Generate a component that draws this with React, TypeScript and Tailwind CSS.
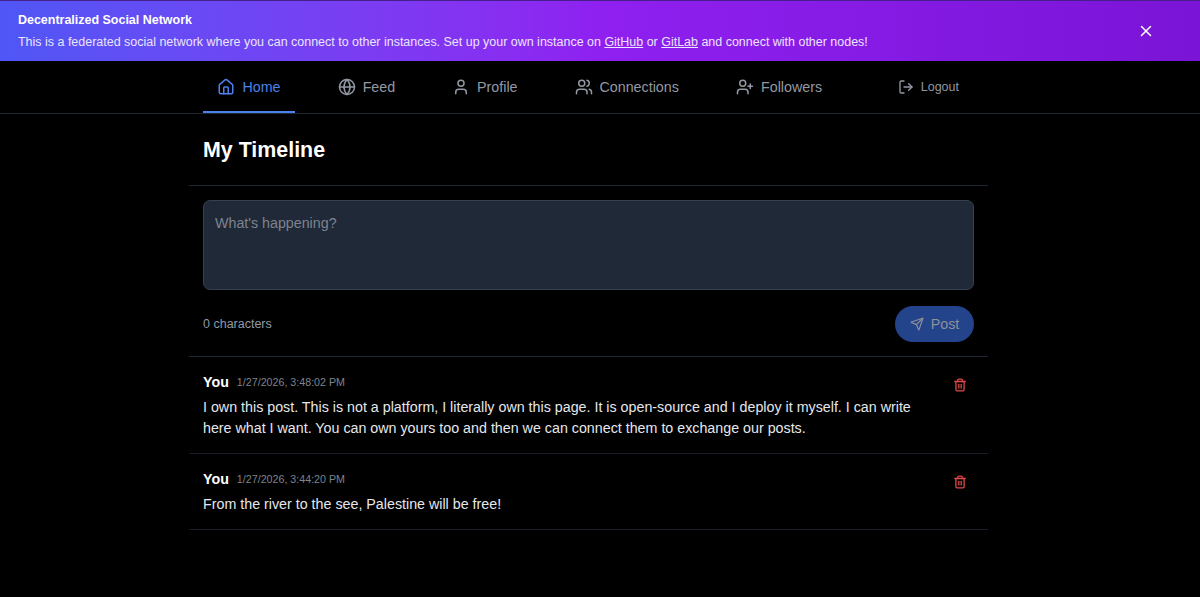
import { useState } from 'react'
import { Globe, House, LogOut, Send, Trash2, User, UserPlus, Users, X, type LucideIcon } from 'lucide-react'

interface NavItem {
    label: string
    icon: LucideIcon
    className: string
}

interface Post {
    id: number
    author: string
    date: string
    content: string
}

const navItems: NavItem[] = [
    { label: "Home", icon: House, className: "w-[92px]" },
    { label: "Feed", icon: Globe, className: "w-[86px]" },
    { label: "Profile", icon: User, className: "w-[94px]" },
    { label: "Connections", icon: Users, className: "w-[133px]" },
    { label: "Followers", icon: UserPlus, className: "w-[115px]" }
]

const initialPosts: Post[] = [
    {
        id: 2,
        author: "You",
        date: "1/27/2026, 3:48:02 PM",
        content: "I own this post. This is not a platform, I literally own this page. It is open-source and I deploy it myself. I can write here what I want. You can own yours too and then we can connect them to exchange our posts."
    },
    {
        id: 1,
        author: "You",
        date: "1/27/2026, 3:44:20 PM",
        content: "From the river to the see, Palestine will be free!"
    }
]

// Main Component
const App = () => {

    const [showBanner, setShowBanner] = useState(true)
    const [active, setActive] = useState("Home")
    const [text, setText] = useState("")
    const [posts, setPosts] = useState<Post[]>(initialPosts)

    const handlePost = () => {
        setPosts([{ id: Date.now(), author: "You", date: new Date().toLocaleString("en-US"), content: text }, ...posts])
        setText("")
    }

    const handleDelete = (id: number) => {
        setPosts(posts.filter((post) => post.id !== id))
    }

    return (
        <div className="min-h-screen bg-black font-['Liberation_Sans',Arial,sans-serif] text-white">

            {showBanner && <Banner onClose={() => setShowBanner(false)} />}

            <nav className="h-[53px] border-b border-[#1e2533] pr-[23px]">
                <div className="mx-auto flex h-[52px] w-[799px] justify-between px-[14px]">

                    <div className="flex gap-[28.4px]">
                        {
                            navItems.map(({ label, icon: Icon, className }) => (
                                <button
                                    key={label}
                                    onClick={() => setActive(label)}
                                    className={`${className} flex items-center justify-center gap-[7px] border-b-2 pt-px text-[14.28px] ${active === label ? "border-[#4a82ee] text-[#4a82ee]" : "border-transparent text-[#9299a5]"}`}>
                                    <Icon size={18} />
                                    <span className="pt-[2px]">{label}</span>
                                </button>
                            ))
                        }
                    </div>

                    <button className="flex items-center gap-[7px] pr-[15px] text-[12.5px] text-[#9299a5]">
                        <LogOut size={16} />
                        Logout
                    </button>

                </div>
            </nav>

            <main className="pr-[23px]">
                <div className="mx-auto w-[799px]">

                    <h1 className="h-[72px] border-b border-[#1e2533] px-[14px] pt-[20px] text-[21.4px] leading-[32px] font-bold">
                        My Timeline
                    </h1>

                    <div className="h-[171px] border-b border-[#1e2533] px-[14px] pt-[14px]">
                        <textarea
                            value={text}
                            onChange={(e) => setText(e.target.value)}
                            placeholder="What's happening?"
                            className="block h-[90px] w-full resize-none rounded-[7px] border border-[#364050] bg-[#202938] px-[11px] pt-[12px] text-[14.25px] leading-[21px] outline-none placeholder:text-[#7d838e]"
                        />
                        <div className="mt-[16px] flex items-center justify-between">
                            <span className="text-[12.5px] text-[#9299a5]">{text.length} characters</span>
                            <button
                                onClick={handlePost}
                                disabled={text.trim() === ""}
                                className="flex h-[36px] w-[79px] items-center justify-center gap-[7px] rounded-full bg-[#3b82f6] text-[14.25px] text-white disabled:bg-[#23438a] disabled:text-[#8d919b]">
                                <Send size={14} />
                                <span className="pt-px">Post</span>
                            </button>
                        </div>
                    </div>

                    {
                        posts.map((post) => (
                            <PostCard key={post.id} post={post} onDelete={handleDelete} />
                        ))
                    }

                </div>
            </main>
        </div>
    )
}


const Banner: React.FC<{ onClose: () => void }> = ({ onClose }) => {
    return (
        <div className="flex h-[61px] items-center justify-between border-t border-[#45208a] bg-linear-to-r from-[#4f56f5] via-[#8f20f0] to-[#7a14d6] pr-[45px] pl-[18px]">
            <div>
                <div className="text-[12.48px] leading-[18px] font-bold">Decentralized Social Network</div>
                <p className="mt-[3px] text-[12.48px] leading-[20px] text-[#ece4fd]">
                    This is a federated social network where you can connect to other instances. Set up your own instance on{" "}
                    <a href="#" className="underline">GitHub</a> or <a href="#" className="underline">GitLab</a> and connect with other nodes!
                </p>
            </div>
            <button onClick={onClose} aria-label="Close">
                <X size={18} />
            </button>
        </div>
    )
}


interface PostCardProps {
    post: Post
    onDelete: (id: number) => void
}

const PostCard: React.FC<PostCardProps> = ({ post, onDelete }) => {
    return (
        <article className="flex items-start justify-between border-b border-[#171c27] px-[14px] py-[14px]">
            <div className="w-[720px]">
                <div className="flex items-center gap-[8px] leading-[22px]">
                    <span className="text-[14.25px] font-bold">{post.author}</span>
                    <span className="text-[10.7px] text-[#7d838e]">{post.date}</span>
                </div>
                <p className="mt-[4px] text-[14.27px] leading-[21px] text-[#e5e7eb]">{post.content}</p>
            </div>
            <button onClick={() => onDelete(post.id)} aria-label="Delete" className="mt-[7px] mr-[7.5px] text-[#e5484a]">
                <Trash2 size={14} strokeWidth={2.2} />
            </button>
        </article>
    )
}


export default App
